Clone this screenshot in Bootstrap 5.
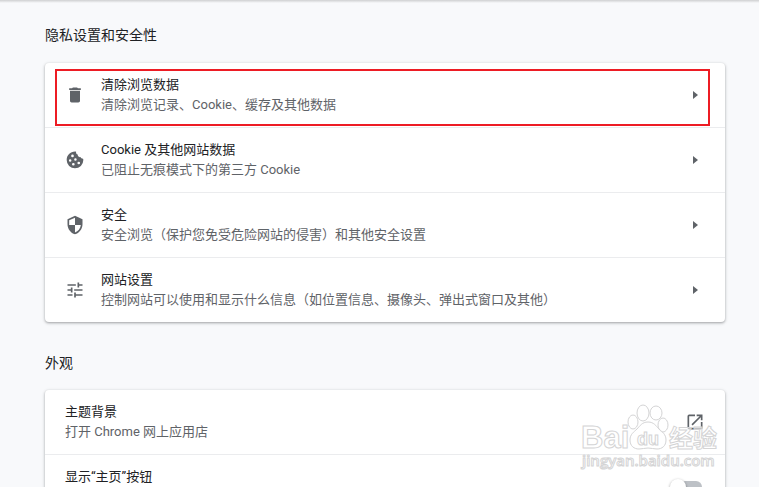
<!DOCTYPE html>
<html lang="zh-CN">
<head>
<meta charset="utf-8">
<meta name="viewport" content="width=device-width, initial-scale=1">
<title>设置</title>
<link href="https://cdn.jsdelivr.net/npm/bootstrap@5.3.0/dist/css/bootstrap.min.css" rel="stylesheet">
<style>
body{background:#f8f9fb;color:#202124;font-family:Roboto,"Noto Sans CJK SC",sans-serif;font-size:13px;line-height:20px}
.page{padding:0 34px 0 45px}
.topline{height:3px;margin:0 -34px 0 -45px;background:linear-gradient(#cfd0d1,#f8f9fb)}
.section-title{font-size:14px;line-height:20px;font-weight:400;margin:0;padding:22px 0 18px}
.section-title.next{padding:31px 0 17px}
.panel{background:#fff;border-radius:4px;box-shadow:0 1px 2px rgba(60,64,67,.3),0 1px 3px 1px rgba(60,64,67,.15)}
.setting{padding:12px 20px;color:#202124;text-decoration:none}
.setting + .setting{border-top:1px solid #ebecee}
.setting svg{fill:#5f6368}
.lead-icon{width:20px;height:20px;margin-right:16px}
.sub{color:#5f6368}
.arrow{width:20px;height:20px}
.outline-box{position:absolute;inset:6px 15px 1px 10px;border:2px solid #ed1c24;pointer-events:none}
.toggle{appearance:none;width:28px;height:12px;margin:14px 3px 0 0;border-radius:6px;background:#bdc1c6}
.toggle::before{content:"";display:block;width:16px;height:16px;margin:-2px 0 0 -4px;border-radius:50%;background:#fff;box-shadow:0 1px 3px rgba(0,0,0,.4)}
.watermark{position:absolute;right:39px;bottom:10px;pointer-events:none}
</style>
<script src="https://cdn.jsdelivr.net/npm/bootstrap@5.3.0/dist/js/bootstrap.bundle.min.js"></script>
</head>
<body>
<main class="page position-relative vh-100 overflow-hidden">
  <div class="topline"></div>
  <h2 class="section-title">隐私设置和安全性</h2>
  <section class="panel">
    <a href="#" class="setting d-flex align-items-center position-relative">
      <svg class="lead-icon" viewBox="0 0 24 24"><path d="M6 19c0 1.100.900 2 2 2h8c1.100 0 2-.900 2-2V7H6v12zM19 4h-3.500l-1-1h-5l-1 1H5v2h14V4z"/></svg>
      <span class="flex-grow-1"><span class="d-block">清除浏览数据</span><span class="d-block sub">清除浏览记录、Cookie、缓存及其他数据</span></span>
      <svg class="arrow" viewBox="0 0 20 20"><path d="M8 6l5 4-5 4z"/></svg>
      <span class="outline-box"></span>
    </a>
    <a href="#" class="setting d-flex align-items-center">
      <svg class="lead-icon" viewBox="0 0 24 24"><path fill-rule="evenodd" d="M21.600 10.500c-1.500 0-2.600-.700-3-2-2 .400-3.600-1-3.300-3C13.700 5 13 3.700 13.300 2 7 1.300 2 6 2 12a10 10 0 0 0 20 0c0-.500-.100-1-.400-1.500zM9 5.500a1.600 1.600 0 1 1 0 3.200 1.600 1.600 0 0 1 0-3.200zM6.200 11a1.500 1.500 0 1 1 0 3 1.500 1.500 0 0 1 0-3zm6.300-1a1.500 1.500 0 1 1 0 3 1.500 1.500 0 0 1 0-3zM10 15.500a1.600 1.600 0 1 1 0 3.200 1.600 1.600 0 0 1 0-3.200zm6.500-1.500a1.600 1.600 0 1 1 0 3.200 1.600 1.600 0 0 1 0-3.200z"/></svg>
      <span class="flex-grow-1"><span class="d-block">Cookie 及其他网站数据</span><span class="d-block sub">已阻止无痕模式下的第三方 Cookie</span></span>
      <svg class="arrow" viewBox="0 0 20 20"><path d="M8 6l5 4-5 4z"/></svg>
    </a>
    <a href="#" class="setting d-flex align-items-center">
      <svg class="lead-icon" viewBox="0 0 24 24"><path d="M12 1L3 5v6c0 5.550 3.840 10.740 9 12 5.160-1.260 9-6.450 9-12V5l-9-4zm0 10.990h7c-.530 4.120-3.280 7.790-7 8.940V12H5V6.300l7-3.110v8.800z"/></svg>
      <span class="flex-grow-1"><span class="d-block">安全</span><span class="d-block sub">安全浏览（保护您免受危险网站的侵害）和其他安全设置</span></span>
      <svg class="arrow" viewBox="0 0 20 20"><path d="M8 6l5 4-5 4z"/></svg>
    </a>
    <a href="#" class="setting d-flex align-items-center">
      <svg class="lead-icon" viewBox="0 0 24 24"><path d="M3 17v2h6v-2H3zM3 5v2h10V5H3zm10 16v-2h8v-2h-8v-2h-2v6h2zM7 9v2H3v2h4v2h2V9H7zm14 4v-2H11v2h10zm-6-4h2V7h4V5h-4V3h-2v6z"/></svg>
      <span class="flex-grow-1"><span class="d-block">网站设置</span><span class="d-block sub">控制网站可以使用和显示什么信息（如位置信息、摄像头、弹出式窗口及其他）</span></span>
      <svg class="arrow" viewBox="0 0 20 20"><path d="M8 6l5 4-5 4z"/></svg>
    </a>
  </section>
  <h2 class="section-title next">外观</h2>
  <section class="panel">
    <a href="#" class="setting d-flex align-items-center">
      <span class="flex-grow-1"><span class="d-block">主题背景</span><span class="d-block sub">打开 Chrome 网上应用店</span></span>
      <svg class="arrow" viewBox="0 0 24 24"><path d="M19 19H5V5h7V3H5a2 2 0 0 0-2 2v14a2 2 0 0 0 2 2h14c1.100 0 2-.900 2-2v-7h-2v7zM14 3v2h3.590l-9.830 9.830 1.410 1.410L19 6.410V10h2V3h-7z"/></svg>
    </a>
    <div class="setting d-flex">
      <label class="flex-grow-1" for="home">显示“主页”按钮</label>
      <input class="toggle" type="checkbox" role="switch" id="home">
    </div>
  </section>
  <svg class="watermark" width="140" height="76" viewBox="580 401 140 76" fill="#fff" fill-opacity=".6" stroke="#d4d4d5" stroke-width="1">
    <ellipse cx="633" cy="422" rx="5" ry="7"/><ellipse cx="643" cy="413" rx="6" ry="8"/><ellipse cx="656" cy="413" rx="6" ry="7"/><ellipse cx="663" cy="425" rx="5" ry="7"/>
    <path d="M648 422c-6 0-8 4-11 7s-7 5-7 11 4 9 9 9c3 0 6-1 9-1s6 1 9 1c5 0 9-3 9-9s-4-8-7-11-5-7-11-7z"/>
    <text x="581" y="448" font-family="Liberation Sans, sans-serif" font-weight="700" font-size="31">Bai</text>
    <text x="637" y="445" font-family="Liberation Sans, sans-serif" font-weight="700" font-size="18">du</text>
    <text x="669" y="447" font-family="Noto Sans CJK SC, sans-serif" font-weight="700" font-size="24">经验</text>
    <text x="582" y="466" font-family="Open Sans, sans-serif" font-weight="600" font-size="15">jingyan.baidu.com</text>
  </svg>
</main>
</body>
</html>
